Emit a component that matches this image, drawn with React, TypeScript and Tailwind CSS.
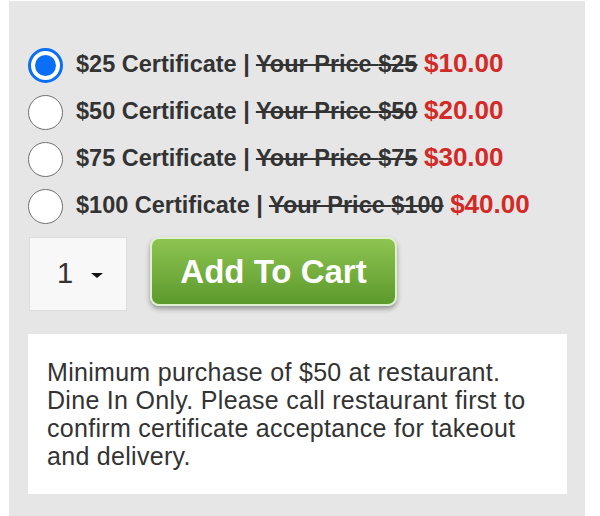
import React, { useState } from 'react';

const options = [
  { label: '$25 Certificate', was: '$25', price: '$10.00' },
  { label: '$50 Certificate', was: '$50', price: '$20.00' },
  { label: '$75 Certificate', was: '$75', price: '$30.00' },
  { label: '$100 Certificate', was: '$100', price: '$40.00' },
];

const App: React.FC = () => {
  const [selected, setSelected] = useState(0);

  return (
    <div className="min-h-[516px] bg-white pl-[9px] pt-px" style={{ fontFamily: '"Liberation Sans", Arial, sans-serif' }}>
      <div className="w-[576px] min-h-[515px] bg-[#e6e6e6] pl-[19px] pr-[18px] pt-[41px] pb-[22px]">
        <div className="flex flex-col">
          {options.map((opt, i) => (
            <label key={opt.label} className="flex h-[47px] items-center cursor-pointer" onClick={() => setSelected(i)}>
              {selected === i ? (
                <span className="flex h-[35px] w-[35px] shrink-0 items-center justify-center rounded-full border-[3px] border-[#0b6ef6] bg-white">
                  <span className="h-[21px] w-[21px] rounded-full bg-[#0b6ef6]" />
                </span>
              ) : (
                <span className="h-[35px] w-[35px] shrink-0 rounded-full border-[1.5px] border-[#707070] bg-white" />
              )}
              <span className="ml-[13px] pb-[5px] whitespace-nowrap text-[23.5px] font-bold text-[#333]">
                {opt.label} | <span className="line-through">Your Price {opt.was}</span>{' '}
                <span className="text-[26px] text-[#d22a26]">{opt.price}</span>
              </span>
            </label>
          ))}
        </div>

        <div className="mt-[7px] flex items-start">
          <div className="ml-px flex h-[74px] w-[98px] items-center justify-center border border-[#dcdcdc] bg-[#f8f8f8] pl-[4px]">
            <span className="text-[29px] text-[#333]">1</span>
            <span className="ml-[18px] mt-[2px] h-0 w-0 border-x-[6px] border-t-[5px] border-x-transparent border-t-[#111]" />
          </div>
          <button className="ml-[23px] flex h-[69px] w-[247px] items-center justify-center rounded-[9px] border-2 border-[#dff0cc] bg-gradient-to-b from-[#8ec451] to-[#5c9a2c] text-[33px] font-bold text-white shadow-[0_3px_5px_rgba(0,0,0,0.35)]">
            Add To Cart
          </button>
        </div>

        <div className="mt-[23px] bg-white px-[19px] py-[24px] text-[25px] leading-[28px] tracking-[0.3px] text-[#333]">
          Minimum purchase of $50 at restaurant.
          <br />
          Dine In Only. Please call restaurant first to
          <br />
          confirm certificate acceptance for takeout
          <br />
          and delivery.
        </div>
      </div>
    </div>
  );
};

export default App;
